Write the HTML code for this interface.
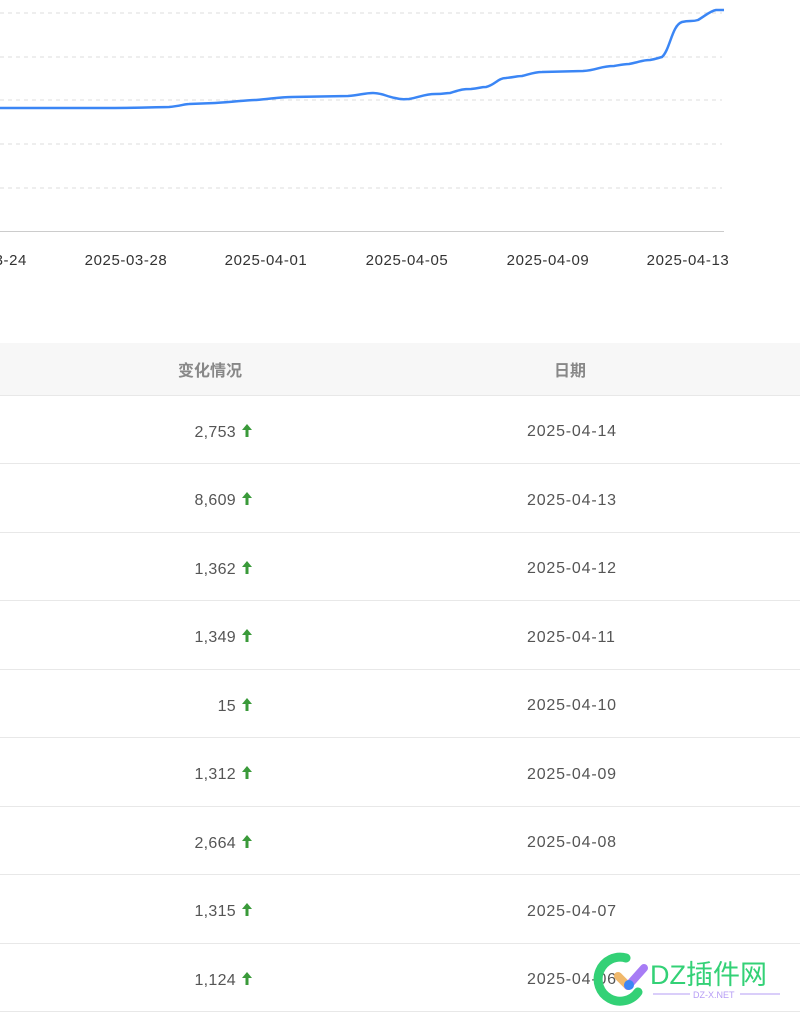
<!DOCTYPE html>
<html><head><meta charset="utf-8"><style>
body{margin:0;width:800px;height:1018px;background:#fff;font-family:"Liberation Sans","Noto Sans CJK SC",sans-serif;position:relative;overflow:hidden}
.lbl{position:absolute;top:252px;font-size:15px;letter-spacing:0.6px;color:#333;width:120px;text-align:center}
table{position:absolute;top:343px;left:0;width:800px;border-collapse:collapse;table-layout:fixed}
th{height:52px;background:#f7f7f7;color:#888;font-size:16px;font-weight:bold;border-bottom:1px solid #e8e8e8;padding:0;box-sizing:border-box}
td{height:68.5px;border-bottom:1px solid #e8e8e8;font-size:16px;letter-spacing:0.8px;color:#555;padding:6px 0 0 0;box-sizing:border-box}
.c1{text-align:right;padding-right:173px;white-space:nowrap;letter-spacing:0.3px}
.ar{display:inline-block;vertical-align:-1px;margin-left:5px}
</style></head><body>
<svg width="800" height="240" style="position:absolute;left:0;top:0">
<g stroke="#ddd" stroke-dasharray="4,4" stroke-width="1">
<line x1="0" y1="13" x2="722" y2="13"/><line x1="0" y1="57" x2="722" y2="57"/><line x1="0" y1="100" x2="722" y2="100"/><line x1="0" y1="144" x2="722" y2="144"/><line x1="0" y1="188" x2="722" y2="188"/>
</g>
<line x1="0" y1="231.5" x2="724" y2="231.5" stroke="#ccc"/>
<path d="M0,108 L102,108 C140,108 160,107 169,107 C180,106 185,104 189,104 L215,103 C235,102 245,100 256,100 C270,99 280,97 292,97 L348,96 C360,95 365,93 373,93 C382,93 385,96 395,98 C402,100 405,99 409,99 C420,97 425,94 435,94 C445,94 445,93 450,93 C460,90 462,89 471,89 C480,88 481,87 486,87 C495,85 498,78 506,78 C515,77 518,76 522,76 C530,74 535,72 542,72 L583,71 C598,70 600,66 614,66 C620,65 624,64 629,64 C640,62 642,60 650,60 C656,59 658,58 662,57 C670,50 672,25 682,22 C690,20 692,22 698,20 C705,16 710,11 716,10 L724,10" fill="none" stroke="#3b86f5" stroke-width="2.5"/>
</svg>
<div class="lbl" style="left:-93px;text-align:right">03-24</div>
<div class="lbl" style="left:66px">2025-03-28</div>
<div class="lbl" style="left:206px">2025-04-01</div>
<div class="lbl" style="left:347px">2025-04-05</div>
<div class="lbl" style="left:488px">2025-04-09</div>
<div class="lbl" style="left:628px">2025-04-13</div>
<table>
<colgroup><col style="width:426px"><col></colgroup>
<tr><th style="text-align:left;padding-left:178px">变化情况</th><th style="text-align:left;padding-left:128px">日期</th></tr>
<tr><td class="c1">2,753<svg class="ar" width="12" height="15" viewBox="0 0 12 15"><path d="M6,1 L11,7 H7.5 V14 H4.5 V7 H1 Z" fill="#3a9a3a"/></svg></td><td style="padding-left:101px">2025-04-14</td></tr>
<tr><td class="c1">8,609<svg class="ar" width="12" height="15" viewBox="0 0 12 15"><path d="M6,1 L11,7 H7.5 V14 H4.5 V7 H1 Z" fill="#3a9a3a"/></svg></td><td style="padding-left:101px">2025-04-13</td></tr>
<tr><td class="c1">1,362<svg class="ar" width="12" height="15" viewBox="0 0 12 15"><path d="M6,1 L11,7 H7.5 V14 H4.5 V7 H1 Z" fill="#3a9a3a"/></svg></td><td style="padding-left:101px">2025-04-12</td></tr>
<tr><td class="c1">1,349<svg class="ar" width="12" height="15" viewBox="0 0 12 15"><path d="M6,1 L11,7 H7.5 V14 H4.5 V7 H1 Z" fill="#3a9a3a"/></svg></td><td style="padding-left:101px">2025-04-11</td></tr>
<tr><td class="c1">15<svg class="ar" width="12" height="15" viewBox="0 0 12 15"><path d="M6,1 L11,7 H7.5 V14 H4.5 V7 H1 Z" fill="#3a9a3a"/></svg></td><td style="padding-left:101px">2025-04-10</td></tr>
<tr><td class="c1">1,312<svg class="ar" width="12" height="15" viewBox="0 0 12 15"><path d="M6,1 L11,7 H7.5 V14 H4.5 V7 H1 Z" fill="#3a9a3a"/></svg></td><td style="padding-left:101px">2025-04-09</td></tr>
<tr><td class="c1">2,664<svg class="ar" width="12" height="15" viewBox="0 0 12 15"><path d="M6,1 L11,7 H7.5 V14 H4.5 V7 H1 Z" fill="#3a9a3a"/></svg></td><td style="padding-left:101px">2025-04-08</td></tr>
<tr><td class="c1">1,315<svg class="ar" width="12" height="15" viewBox="0 0 12 15"><path d="M6,1 L11,7 H7.5 V14 H4.5 V7 H1 Z" fill="#3a9a3a"/></svg></td><td style="padding-left:101px">2025-04-07</td></tr>
<tr><td class="c1">1,124<svg class="ar" width="12" height="15" viewBox="0 0 12 15"><path d="M6,1 L11,7 H7.5 V14 H4.5 V7 H1 Z" fill="#3a9a3a"/></svg></td><td style="padding-left:101px">2025-04-06</td></tr>
</table>
<svg width="220" height="88" style="position:absolute;left:580px;top:930px">
<path d="M46,28 A22,22 0 1 0 58,62" fill="none" stroke="#33d176" stroke-width="9" stroke-linecap="round"/>
<path d="M38,46 L48,56" stroke="#f0b86b" stroke-width="8" stroke-linecap="round"/>
<path d="M48,56 L64,38" stroke="#a77cf5" stroke-width="8" stroke-linecap="round"/>
<circle cx="49" cy="55" r="5" fill="#3b86f5"/>
<text x="70" y="54" font-family="Liberation Sans,Noto Sans CJK SC,sans-serif" font-size="27" fill="#33d176">DZ插件网</text>
<line x1="73" y1="64" x2="110" y2="64" stroke="#b69cf5"/><line x1="160" y1="64" x2="200" y2="64" stroke="#b69cf5"/>
<text x="113" y="68" font-family="Liberation Sans,sans-serif" font-size="9" fill="#b69cf5">DZ-X.NET</text>
</svg>
</body></html>
